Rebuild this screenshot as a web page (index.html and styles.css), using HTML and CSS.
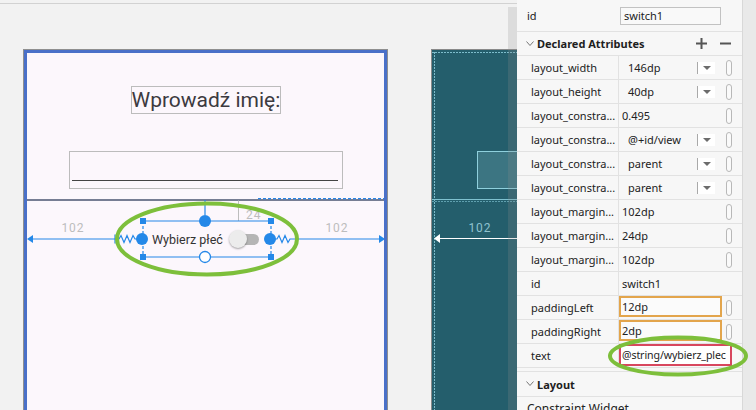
FILE: index.html
```html
<!DOCTYPE html>
<html lang="pl">
<head>
<meta charset="utf-8">
<title>Layout editor</title>
<link rel="stylesheet" href="styles.css">
</head>
<body>
<div class="app">
  <div class="design">
    <div class="topline"></div>
    <div class="devices">
      <div class="device-light">
        <div class="title">Wprowadź imię:</div>
        <div class="edit"><div class="edit-line"></div></div>
        <div class="switch">
          <span class="switch-text">Wybierz płeć</span>
          <span class="toggle"><span class="thumb"></span><span class="track"></span></span>
        </div>
        <svg class="overlay" viewBox="27 53 357 357" width="357" height="357">
          <line x1="27" y1="200" x2="384" y2="200" stroke="#4a5470" stroke-width="1.3"/>
          <line x1="258" y1="198.6" x2="384" y2="198.6" stroke="#2a86e6" stroke-width="1.2" stroke-dasharray="3 2"/>
          <line x1="205" y1="200" x2="205" y2="215" stroke="#2488e8" stroke-width="1.2"/>
          <line x1="238.5" y1="200.5" x2="238.5" y2="221" stroke="#bdbdbd"/>
          <text x="246" y="219" class="dim">24</text>
          <line x1="143" y1="221" x2="271" y2="221" stroke="#2488e8" stroke-width="1.2"/>
          <line x1="143" y1="257" x2="271" y2="257" stroke="#2488e8" stroke-width="1.2"/>
          <line x1="143" y1="221" x2="143" y2="257" stroke="#2488e8" stroke-width="1.2" stroke-dasharray="3 2"/>
          <line x1="271" y1="221" x2="271" y2="257" stroke="#2488e8" stroke-width="1.2" stroke-dasharray="3 2"/>
          <rect x="140" y="218" width="6" height="6" fill="#2488e8"/>
          <rect x="268" y="218" width="6" height="6" fill="#2488e8"/>
          <rect x="140" y="254" width="6" height="6" fill="#2488e8"/>
          <rect x="268" y="254" width="6" height="6" fill="#2488e8"/>
          <circle cx="205" cy="221" r="6" fill="#2488e8"/>
          <circle cx="205" cy="257" r="5.5" fill="#fff" stroke="#2488e8" stroke-width="1.3"/>
          <circle cx="142" cy="239" r="6" fill="#2488e8"/>
          <circle cx="270" cy="239" r="6" fill="#2488e8"/>
          <line x1="31" y1="239" x2="115" y2="239" stroke="#2488e8" stroke-width="1.2"/>
          <polygon points="27,239 33,235 33,243" fill="#2488e8"/>
          <line x1="115" y1="234.5" x2="115" y2="243.5" stroke="#2488e8" stroke-width="1.2"/>
          <path d="M115 239 H119 L121 235.5 L124 242.5 L127 235.5 L130 242.5 L133 235.5 L135 239 H137" fill="none" stroke="#2488e8" stroke-width="1.2"/>
          <path d="M275 239 H277 L279 235.5 L282 242.5 L285 235.5 L288 242.5 L290 239 H292" fill="none" stroke="#2488e8" stroke-width="1.2"/>
          <line x1="292" y1="239" x2="380" y2="239" stroke="#2488e8" stroke-width="1.2"/>
          <polygon points="385,239 379,235 379,243" fill="#2488e8"/>
          <text x="73" y="232" class="dim" text-anchor="middle">102</text>
          <text x="337" y="232" class="dim" text-anchor="middle">102</text>
          <ellipse cx="207" cy="239" rx="90" ry="35.5" fill="none" stroke="#7dbf3b" stroke-width="4"/>
        </svg>
      </div>
      <div class="device-dark">
        <svg class="overlay-dark" viewBox="432 50 118 360" width="118" height="360">
          <line x1="434.5" y1="52" x2="434.5" y2="410" stroke="#7dbccb" stroke-dasharray="2 1"/>
          <line x1="432" y1="52.5" x2="550" y2="52.5" stroke="#7dbccb" stroke-dasharray="2 1"/>
          <line x1="432" y1="199.5" x2="550" y2="199.5" stroke="#7fc2d0"/>
          <line x1="432" y1="201.5" x2="550" y2="201.5" stroke="#5f9fae" stroke-dasharray="2 1"/>
          <rect x="477.5" y="151.5" width="80" height="37" fill="#3c7582" stroke="#8fd0dd"/>
          <line x1="438" y1="238.5" x2="550" y2="238.5" stroke="#ffffff"/>
          <polygon points="434,238.5 440,234 440,243" fill="#ffffff"/>
          <text x="480" y="232" class="dim-dark" text-anchor="middle">102</text>
        </svg>
      </div>
    </div>
    <div class="edge-shade"></div>
  </div>

  <div class="props">
    <div class="id-row">
      <span class="id-label">id</span>
      <span class="id-input">switch1</span>
    </div>
    <div class="section-head">
      <svg class="chev" width="8" height="6" viewBox="0 0 8 6"><polyline points="0.5,0.5 4,4.5 7.5,0.5" fill="none" stroke="#777" stroke-width="1"/></svg>
      <span>Declared Attributes</span>
      <span class="head-actions">
        <svg width="11" height="11" viewBox="0 0 11 11"><path d="M5.5 0 V11 M0 5.5 H11" stroke="#555" stroke-width="2"/></svg>
        <svg width="11" height="11" viewBox="0 0 11 11"><path d="M0 5.5 H11" stroke="#555" stroke-width="2"/></svg>
      </span>
    </div>

    <div class="row"><div class="lbl">layout_width</div><div class="val"><span class="t dd-t">146dp</span><span class="dd"></span><span class="pill"></span></div></div>
    <div class="row"><div class="lbl">layout_height</div><div class="val"><span class="t dd-t">40dp</span><span class="dd"></span><span class="pill"></span></div></div>
    <div class="row"><div class="lbl">layout_constra...</div><div class="val"><span class="t">0.495</span><span class="dd none"></span><span class="pill"></span></div></div>
    <div class="row"><div class="lbl">layout_constra...</div><div class="val"><span class="t dd-t">@+id/view</span><span class="dd"></span><span class="pill"></span></div></div>
    <div class="row"><div class="lbl">layout_constra...</div><div class="val"><span class="t dd-t">parent</span><span class="dd"></span><span class="pill"></span></div></div>
    <div class="row"><div class="lbl">layout_constra...</div><div class="val"><span class="t dd-t">parent</span><span class="dd"></span><span class="pill"></span></div></div>
    <div class="row"><div class="lbl">layout_margin...</div><div class="val"><span class="t">102dp</span><span class="dd none"></span><span class="pill"></span></div></div>
    <div class="row"><div class="lbl">layout_margin...</div><div class="val"><span class="t">24dp</span><span class="dd none"></span><span class="pill"></span></div></div>
    <div class="row"><div class="lbl">layout_margin...</div><div class="val"><span class="t">102dp</span><span class="dd none"></span><span class="pill"></span></div></div>
    <div class="row"><div class="lbl">id</div><div class="val"><span class="t">switch1</span></div></div>
    <div class="row"><div class="lbl">paddingLeft</div><div class="val"><span class="box box-warn">12dp</span><span class="pill"></span></div></div>
    <div class="row"><div class="lbl">paddingRight</div><div class="val"><span class="box box-warn">2dp</span><span class="pill"></span></div></div>
    <div class="row"><div class="lbl">text</div><div class="val"><span class="box box-err">@string/wybierz_plec</span></div></div>

    <div class="section-head layout-head">
      <svg class="chev" width="8" height="6" viewBox="0 0 8 6"><polyline points="0.5,0.5 4,4.5 7.5,0.5" fill="none" stroke="#777" stroke-width="1"/></svg>
      <span>Layout</span>
    </div>
    <div class="cw">Constraint Widget</div>

    <svg class="mark" width="144" height="44" viewBox="0 0 144 44"><ellipse cx="72" cy="22" rx="68" ry="18.5" fill="none" stroke="#7dbf3b" stroke-width="4"/></svg>
  </div>
  <div class="scroll"></div>
</div>
</body>
</html>
```
FILE: styles.css
```css
* { box-sizing: border-box; }
html, body { margin: 0; padding: 0; }
body {
  width: 756px;
  height: 410px;
  overflow: hidden;
  background: #f2f2f2;
  font-family: "Noto Sans", "Liberation Sans", sans-serif;
}
.app { display: flex; height: 410px; }

/* design surface */
.design {
  position: relative;
  width: 517px;
  flex: none;
  overflow: hidden;
  background: #f2f2f2;
}
.topline { margin-top: 3px; height: 1px; background: #d2d2d2; }
.devices {
  display: flex;
  align-items: flex-start;
  gap: 44px;
  margin-top: 45px;
  padding-left: 24px;
}
.device-light {
  position: relative;
  flex: none;
  margin-top: 1px;
  width: 363px;
  height: 400px;
  border: 3px solid #4a70c8;
  box-shadow: 0 0 0 1px #8f8f8f;
  background: #fcf7fc;
  padding-top: 33px;
}
.title {
  width: 150px;
  height: 28px;
  margin: 0 auto;
  border: 1px solid #bcbcbc;
  font-family: Roboto, "Noto Sans", sans-serif;
  font-size: 21px;
  line-height: 26px;
  text-align: center;
  color: #3c3a40;
  white-space: nowrap;
}
.edit {
  width: 274px;
  height: 38px;
  margin: 37px auto 0;
  border: 1px solid #bcbcbc;
  display: flex;
  align-items: flex-end;
  padding: 0 4px 7px 2px;
}
.edit-line { flex: 1; height: 1px; background: #444; }
.switch {
  display: flex;
  align-items: center;
  width: 128px;
  height: 36px;
  margin: 32px 0 0 116px;
  padding-left: 9px;
  font-family: Roboto, "Noto Sans", sans-serif;
  font-size: 12.5px;
  color: #333;
  white-space: nowrap;
}
.toggle { display: flex; align-items: center; margin-left: 6px; }
.thumb {
  position: relative;
  z-index: 1;
  width: 18px;
  height: 18px;
  border-radius: 50%;
  background: #ececec;
  box-shadow: 0 1px 2px rgba(0,0,0,0.35);
}
.track {
  width: 20px;
  height: 11px;
  margin-left: -8px;
  border-radius: 6px;
  background: #b5b5b5;
}
.overlay { position: absolute; left: 0; top: 0; }
.dim { font-family: Roboto, "Noto Sans", sans-serif; font-size: 12px; fill: #bdbdbd; letter-spacing: 1px; }

.device-dark {
  position: relative;
  flex: none;
  width: 120px;
  height: 400px;
  border: 1px solid #8a8a8a;
  background: #245e6c;
}
.overlay-dark { position: absolute; left: 0; top: 0; }
.dim-dark { font-family: Roboto, "Noto Sans", sans-serif; font-size: 12px; fill: #8fc2cf; letter-spacing: 1px; }

.edge-shade {
  position: absolute;
  right: 0;
  top: 7px;
  bottom: 0;
  width: 9px;
  background: rgba(140,140,140,0.22);
}

/* properties panel */
.props {
  position: relative;
  width: 225px;
  flex: none;
  background: #f7f7f7;
  font-size: 11px;
  color: #222;
}
.scroll { flex: 1; background: #e9e9e9; border-left: 1px solid #d8d8d8; }

.id-row {
  height: 32px;
  border-bottom: 1px solid #e2e2e2;
  display: flex;
  align-items: center;
  padding-left: 10px;
}
.id-label { width: 93px; }
.id-input {
  width: 101px;
  height: 18px;
  border: 1px solid #c2c2c2;
  background: #f9f9f9;
  padding-left: 3px;
  line-height: 16px;
}
.section-head {
  height: 24px;
  border-bottom: 1px solid #e2e2e2;
  display: flex;
  align-items: center;
  padding-left: 9px;
  font-weight: bold;
  color: #1e1e1e;
}
.chev { margin-right: 3px; flex: none; }
.head-actions {
  margin-left: auto;
  display: flex;
  gap: 13px;
  padding-right: 11px;
}
.row {
  display: grid;
  grid-template-columns: 102px 1fr;
  height: 24px;
  border-bottom: 1px solid #e2e2e2;
}
.lbl {
  border-right: 1px solid #e2e2e2;
  padding-left: 14px;
  display: flex;
  align-items: center;
  white-space: nowrap;
  overflow: hidden;
}
.val {
  display: flex;
  align-items: center;
  padding-right: 10px;
  white-space: nowrap;
  min-width: 0;
}
.t { flex: 1; padding-left: 3px; }
.t.dd-t { padding-left: 9px; }
.dd {
  width: 18px;
  height: 12px;
  margin-right: 11px;
  background: #fff;
  border-left: 1px solid #a9a9a9;
  display: flex;
  align-items: center;
  justify-content: center;
}
.dd::after {
  content: "";
  border-left: 4px solid transparent;
  border-right: 4px solid transparent;
  border-top: 4px solid #6c6c6c;
}
.dd.none { visibility: hidden; }
.pill {
  width: 6px;
  height: 16px;
  border: 1px solid #b8b8b8;
  border-radius: 3px;
  background: #fafafa;
  flex: none;
}
.box {
  align-self: flex-start;
  display: flex;
  align-items: center;
  height: 21px;
  padding-left: 1px;
  overflow: hidden;
  background: #fbfbfb;
}
.box-warn { width: 104px; margin-right: 4px; border: 2px solid #e3a54c; }
.box-err {
  width: 118px;
  height: 22px;
  border: 2px solid #d8475e;
  background: #fff;
  font-size: 10.6px;
  letter-spacing: -0.1px;
}
.layout-head { margin-top: 3px; border-top: 1px solid #e2e2e2; height: 26px; }
.cw { padding: 3px 0 0 10px; font-size: 12px; }
.mark { position: absolute; left: 89px; top: 334px; z-index: 2; }
```
